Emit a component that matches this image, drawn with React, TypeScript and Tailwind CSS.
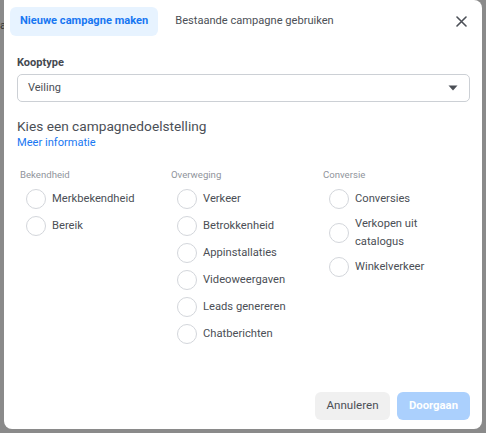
import React from "react";

const Radio = ({ label }: { label: React.ReactNode }) => (
  <div className="flex items-center h-[27px] pl-[6px]">
    <span className="w-[20px] h-[20px] rounded-full border border-[#d3d6db] bg-white shrink-0" />
    <span className="ml-[6px] text-[11.2px] text-[#4b4f56] leading-[18px]">{label}</span>
  </div>
);

const Header = ({ title }: { title: string }) => (
  <div className="text-[9.6px] text-[#90949c] h-[14px] leading-[14px] mb-[3px]">{title}</div>
);

export default function App() {
  return (
    <div
      className="w-[486px] h-[433px] bg-[#8a8a8a] relative overflow-hidden"
      style={{ fontFamily: "Roboto, 'Liberation Sans', sans-serif" }}
    >
      <div className="absolute left-0 top-[18px] text-[11px] text-[#333]">a</div>
      <div className="relative ml-[4px] w-[478px] h-[429px] bg-white rounded-b-[8px] rounded-tr-[8px] flex flex-col">
        {/* Header */}
        <div className="flex items-center pt-[7px] pl-[6px] pr-[15px]">
          <div className="h-[29px] px-[10px] flex items-center rounded-[6px] bg-[#e7f3ff] text-[#1877f2] text-[11.1px] font-bold">
            Nieuwe campagne maken
          </div>
          <div className="ml-[7px] h-[29px] px-[10px] flex items-center text-[11.1px] text-[#4b4f56]">
            Bestaande campagne gebruiken
          </div>
          <div className="ml-auto w-[12px] h-[12px] flex items-center justify-center">
            <svg width="11" height="11" viewBox="0 0 11 11">
              <path d="M1 1L10 10M10 1L1 10" stroke="#4b4f56" strokeWidth="1.6" strokeLinecap="round" />
            </svg>
          </div>
        </div>

        {/* Body */}
        <div className="px-[13px] pt-[20px] flex flex-col">
          <div className="text-[11px] font-bold text-[#444950] leading-[14px]">Kooptype</div>
          <div className="mt-[4px] h-[28px] w-[453px] border border-[#ccd0d5] rounded-[5px] flex items-center pl-[10px] pr-[11px]">
            <span className="text-[11px] text-[#4b4f56]">Veiling</span>
            <svg className="ml-auto" width="10" height="6" viewBox="0 0 10 6">
              <path d="M0.5 0.5H9.5L5 5.5Z" fill="#4b4f56" />
            </svg>
          </div>

          <div className="mt-[15px] text-[13.7px] text-[#4b4f56] leading-[18px]">Kies een campagnedoelstelling</div>
          <div className="mt-[1px] text-[11.1px] text-[#1877f2] leading-[14px]">Meer informatie</div>

          <div className="mt-[18px] pl-[3px] flex">
            <div className="w-[151px] shrink-0 flex flex-col">
              <Header title="Bekendheid" />
              <Radio label="Merkbekendheid" />
              <Radio label="Bereik" />
            </div>
            <div className="w-[152px] shrink-0 flex flex-col">
              <Header title="Overweging" />
              {["Verkeer", "Betrokkenheid", "Appinstallaties", "Videoweergaven", "Leads genereren", "Chatberichten"].map(
                (t) => (
                  <Radio key={t} label={t} />
                )
              )}
            </div>
            <div className="w-[140px] shrink-0 flex flex-col">
              <Header title="Conversie" />
              <Radio label="Conversies" />
              <div className="flex items-center h-[41px] pl-[6px]">
                <span className="w-[20px] h-[20px] rounded-full border border-[#d3d6db] bg-white shrink-0" />
                <span className="ml-[6px] text-[11.2px] text-[#4b4f56] leading-[18px]">
                  Verkopen uit
                  <br />
                  catalogus
                </span>
              </div>
              <Radio label="Winkelverkeer" />
            </div>
          </div>
        </div>

        {/* Footer */}
        <div className="mt-auto mb-[9px] pr-[12px] flex justify-end gap-[7px]">
          <button className="h-[28px] w-[75px] rounded-[6px] bg-[#f0f0f0] text-[11.6px] text-[#4b4f56]">Annuleren</button>
          <button className="h-[28px] w-[73px] rounded-[6px] bg-[#abd0fd] text-[11.3px] font-bold text-white">Doorgaan</button>
        </div>
      </div>
    </div>
  );
}
